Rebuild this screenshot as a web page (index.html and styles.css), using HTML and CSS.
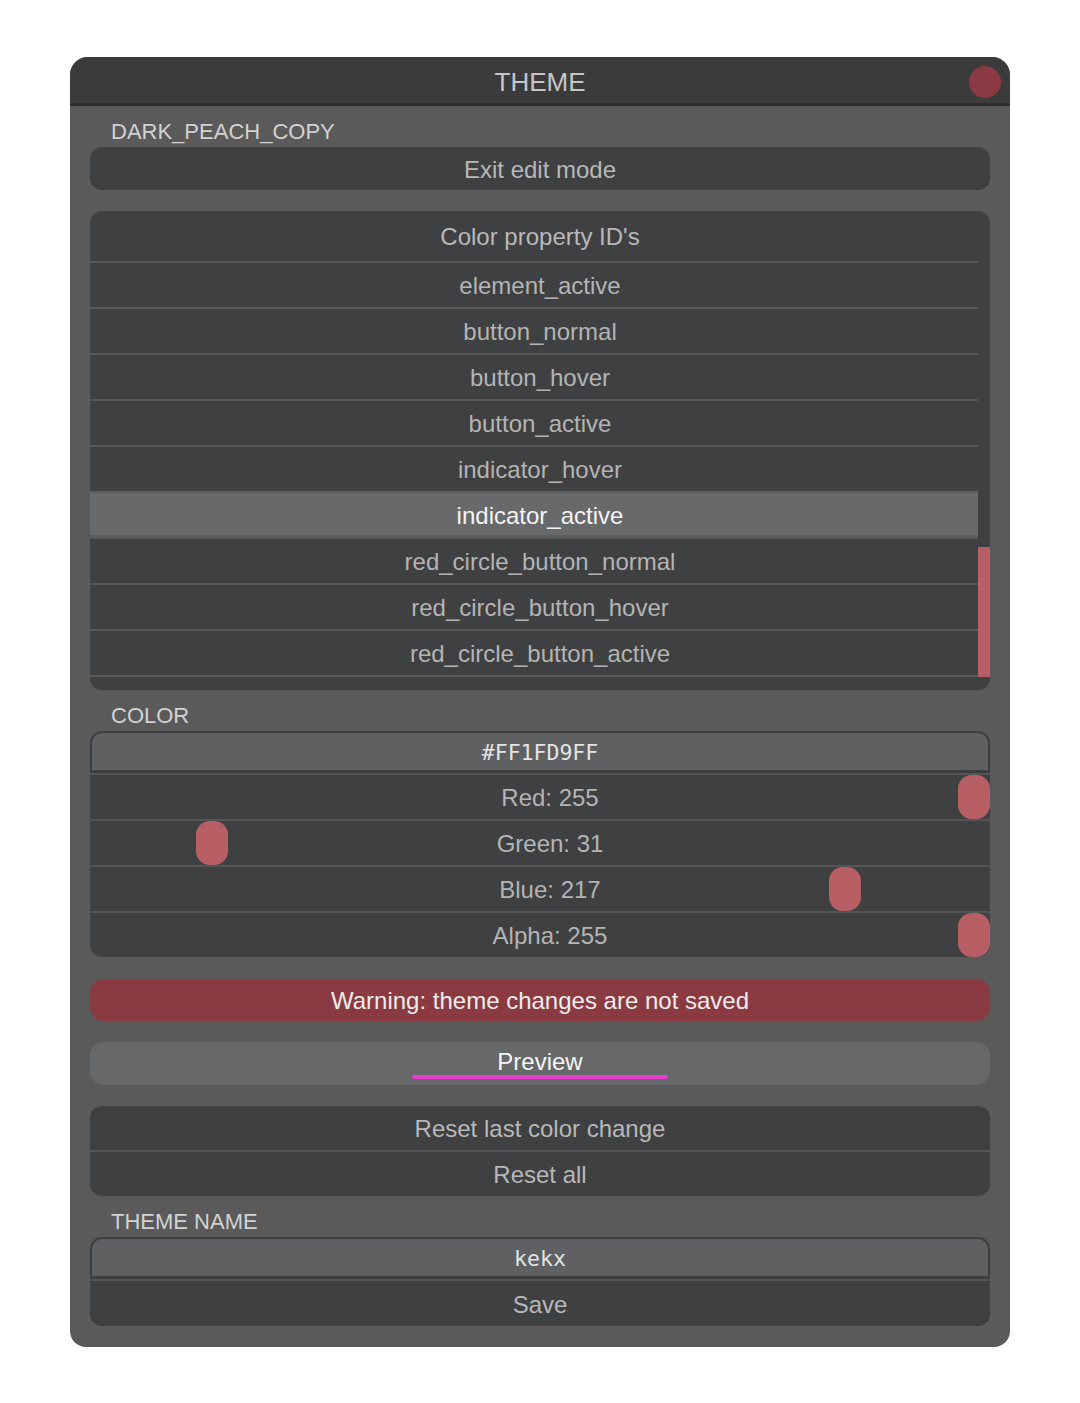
FILE: index.html
```html
<!DOCTYPE html>
<html>
<head>
<meta charset="utf-8">
<link rel="stylesheet" href="styles.css">
</head>
<body>
<div class="window">
  <div class="titlebar">
    <span></span>
    <span class="title">THEME</span>
    <span class="close"></span>
  </div>
  <div class="content">
    <div class="label">DARK_PEACH_COPY</div>
    <div class="btn btn-dark">Exit edit mode</div>

    <div class="list">
      <div class="list-head">Color property ID's</div>
      <div class="list-body">
        <div class="rows">
          <div class="row">element_active</div>
          <div class="row">button_normal</div>
          <div class="row">button_hover</div>
          <div class="row">button_active</div>
          <div class="row">indicator_hover</div>
          <div class="row row-sel">indicator_active</div>
          <div class="row">red_circle_button_normal</div>
          <div class="row">red_circle_button_hover</div>
          <div class="row">red_circle_button_active</div>
          <div class="rows-end"></div>
        </div>
        <div class="track"><div class="thumb"></div></div>
      </div>
    </div>

    <div class="label">COLOR</div>
    <div class="group">
      <div class="input mono">#FF1FD9FF</div>
      <div class="slider"><span class="handle" style="left: 868px"></span><span class="stext">Red: 255</span></div>
      <div class="slider"><span class="handle" style="left: 106px"></span><span class="stext">Green: 31</span></div>
      <div class="slider"><span class="handle" style="left: 739px"></span><span class="stext">Blue: 217</span></div>
      <div class="slider last"><span class="handle" style="left: 868px"></span><span class="stext">Alpha: 255</span></div>
    </div>

    <div class="btn btn-warn">Warning: theme changes are not saved</div>

    <div class="btn btn-preview"><span class="preview-text">Preview</span><span class="underline"></span></div>

    <div class="group group-gap">
      <div class="gbtn first">Reset last color change</div>
      <div class="gbtn sep last">Reset all</div>
    </div>

    <div class="label">THEME NAME</div>
    <div class="group">
      <div class="input">kekx</div>
      <div class="gbtn sep2 last">Save</div>
    </div>
  </div>
</div>
</body>
</html>
```

FILE: styles.css
```css
* { box-sizing: border-box; }
html, body { margin: 0; padding: 0; background: #ffffff; }
body {
  font-family: "Liberation Sans", Arial, sans-serif;
  padding: 57px 0 0 70px;
}
.window {
  width: 940px;
  height: 1290px;
  background: #5a5a5a;
  border-radius: 18px 18px 16px 16px;
  overflow: hidden;
}
.titlebar {
  height: 49px;
  background: #3b3b3b;
  border-bottom: 3px solid #2d2d2d;
  display: grid;
  grid-template-columns: 1fr auto 1fr;
  align-items: center;
  padding-top: 3px;
}
.title {
  color: #c6c6c6;
  font-size: 26px;
  line-height: 30px;
}
.close {
  justify-self: end;
  width: 32px;
  height: 32px;
  border-radius: 50%;
  background: #8b3942;
  margin-right: 9px;
}
.content {
  padding: 0 20px 20px 20px;
  display: flex;
  flex-direction: column;
}
.label {
  color: #d2d2d2;
  font-size: 22px;
  line-height: 22px;
  height: 41px;
  padding: 15px 0 0 21px;
}
.btn {
  height: 43px;
  border-radius: 12px;
  display: flex;
  align-items: center;
  justify-content: center;
  font-size: 24px;
  color: #b8b8b8;
  padding-top: 2px;
}
.btn-dark { background: #3f4042; }
.list {
  margin-top: 21px;
  background: #3f4042;
  border-radius: 12px;
  padding-bottom: 13px;
}
.list-head {
  height: 50px;
  display: flex;
  align-items: center;
  justify-content: center;
  font-size: 24px;
  color: #b8b8b8;
  padding-top: 2px;
}
.list-body {
  display: flex;
}
.rows {
  flex: 1;
}
.row {
  height: 46px;
  border-top: 2px solid #57585a;
  display: flex;
  align-items: center;
  justify-content: center;
  padding-left: 12px;
  padding-top: 2px;
  font-size: 24px;
  color: #b4b4b4;
}
.row-sel {
  background: #68696b;
  border-top-color: #5c5d5f;
  color: #f4f4f4;
  box-shadow: inset 0 -2px 0 #5c5d5f;
}
.rows-end {
  height: 2px;
  background: #57585a;
}
.track {
  width: 12px;
}
.thumb {
  margin-top: 286px;
  height: 130px;
  background: #b85f66;
}
.group {
  display: flex;
  flex-direction: column;
}
.group-gap { margin-top: 21px; }
.input {
  height: 42px;
  background: #5f6062;
  border: 2px solid #3d3e40;
  border-bottom-width: 3px;
  border-radius: 12px 12px 0 0;
  display: flex;
  align-items: center;
  justify-content: center;
  font-family: "DejaVu Sans Mono", monospace;
  font-size: 21.5px;
  color: #e4e4e4;
  padding-top: 1px;
}
.slider {
  position: relative;
  height: 46px;
  background: #3f4042;
  border-top: 2px solid #545557;
  display: flex;
  align-items: center;
  justify-content: center;
  padding-left: 20px;
  padding-top: 2px;
}
.slider.last { border-radius: 0 0 12px 12px; }
.handle {
  position: absolute;
  top: 0;
  width: 32px;
  height: 44px;
  border-radius: 14px;
  background: #b85f66;
}
.stext {
  position: relative;
  font-size: 24px;
  color: #b4b4b4;
}
.btn-warn {
  margin-top: 22px;
  height: 42px;
  background: #8b3a42;
  border-radius: 14px;
  color: #ececec;
}
.btn-preview {
  margin-top: 21px;
  background: #67686a;
  border-radius: 14px;
  flex-direction: column;
  color: #f6f6f6;
  padding-top: 0;
}
.preview-text {
  line-height: 26px;
}
.underline {
  width: 256px;
  height: 4px;
  border-radius: 2px;
  background: #ea3dd0;
  margin-top: 0px;
}
.gbtn {
  height: 44px;
  background: #3f4042;
  display: flex;
  align-items: center;
  justify-content: center;
  font-size: 24px;
  color: #b8b8b8;
  padding-top: 2px;
}
.gbtn.first { border-radius: 12px 12px 0 0; }
.gbtn.sep { height: 46px; border-top: 2px solid #545557; }
.gbtn.sep2 { height: 47px; border-top: 2px solid #545557; }
.gbtn.last { border-radius: 0 0 12px 12px; }
```
